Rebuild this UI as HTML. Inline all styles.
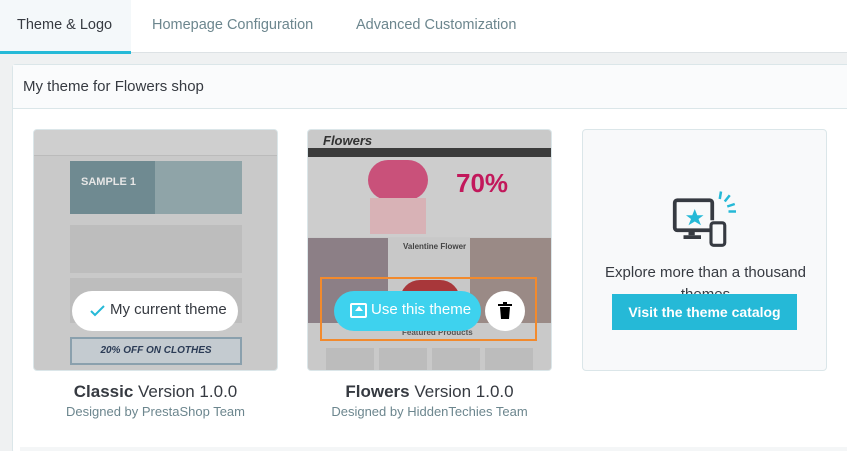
<!DOCTYPE html>
<html style="height:451px;overflow:hidden"><head><style>
*{margin:0;padding:0;box-sizing:border-box}
body{width:847px;height:451px;overflow:hidden;background:#eff1f2;font-family:"Liberation Sans",sans-serif;position:relative}
.tabs{position:absolute;left:0;top:0;width:847px;height:53px;background:#fff;border-bottom:1px solid #dde2e5}
.tab{position:absolute;top:17px;font-size:14.5px;color:#6c868e}
.act{position:absolute;left:0;top:0;width:131px;height:54px;background:#f4f8fa;border-bottom:3px solid #25b9d7}
.panel{position:absolute;left:12px;top:64px;width:840px;height:390px;background:#fff;border:1px solid #dbe6e9;border-radius:4px}
.ph{height:44px;background:#fafbfc;border-bottom:1px solid #dbe6e9;padding:13px 10px;font-size:15px;color:#363a41}
.card{position:absolute;top:129px;width:245px;height:242px;border:1px solid #dbe6e9;border-radius:4px;overflow:hidden;background:#c9c9c9}
.cap{position:absolute;text-align:center;width:245px}
.t1{font-size:17px;color:#363a41;top:382px}
.t2{font-size:13px;color:#6c868e;top:404px}
</style></head><body>
<div class="tabs"><div class="act"></div>
<div class="tab" style="left:17px;color:#363a41">Theme &amp; Logo</div>
<div class="tab" style="left:152px">Homepage Configuration</div>
<div class="tab" style="left:356px">Advanced Customization</div></div>
<div class="panel"><div class="ph">My theme for Flowers shop</div></div>
<div style="position:absolute;left:20px;top:447px;width:827px;height:4px;background:#f4f6f7"></div>

<div class="card" style="left:33px">
 <div style="position:absolute;left:0;top:0;width:245px;height:26px;background:#cfcfcf;border-bottom:1px solid #bbb"></div>
 <div style="position:absolute;left:36px;top:31px;width:172px;height:53px;background:#8fa4a8"></div>
 <div style="position:absolute;left:36px;top:31px;width:85px;height:53px;background:#6f8a91"></div>
 <div style="position:absolute;left:47px;top:46px;color:#e6e6e6;font-size:11px;font-weight:bold">SAMPLE 1</div>
 <div style="position:absolute;left:36px;top:95px;width:172px;height:48px;background:#bdbdbd"></div>
 <div style="position:absolute;left:36px;top:148px;width:172px;height:45px;background:#bdbdbd"></div>
 <div style="position:absolute;left:36px;top:207px;width:172px;height:28px;background:#c4cbd0;border:2px solid #8aa0ad;text-align:center;font-size:10px;font-weight:bold;font-style:italic;color:#2b3b55;padding-top:6px">20% OFF ON CLOTHES</div>
 <div style="position:absolute;left:38px;top:161px;width:166px;height:40px;background:#fff;border-radius:20px;font-size:15px;color:#363a41;padding:10px 0 0 38px">My current theme</div>
 <svg style="position:absolute;left:56px;top:175px" width="15" height="12"><path d="M1 6l4 4 9-9" stroke="#25b9d7" stroke-width="2" fill="none"/></svg>
</div>
<div class="cap t1" style="left:33px"><b>Classic</b> Version 1.0.0</div>
<div class="cap t2" style="left:33px">Designed by PrestaShop Team</div>

<div class="card" style="left:307px">
 <div style="position:absolute;left:15px;top:3px;font-size:13px;font-weight:bold;font-style:italic;color:#333">Flowers</div>
 <div style="position:absolute;left:0;top:18px;width:245px;height:9px;background:#3b3b3b"></div>
 <div style="position:absolute;left:0;top:27px;width:245px;height:80px;background:#cdcdcd"></div>
 <div style="position:absolute;left:60px;top:30px;width:60px;height:40px;background:#c9517a;border-radius:20px"></div>
 <div style="position:absolute;left:62px;top:68px;width:56px;height:36px;background:#d8b2b6"></div>
 <div style="position:absolute;left:148px;top:38px;font-size:26px;font-weight:bold;color:#c2185b">70%</div>
 <div style="position:absolute;left:0;top:108px;width:80px;height:85px;background:#8c7f86"></div>
 <div style="position:absolute;left:80px;top:108px;width:82px;height:85px;background:#c8c8c8"></div>
 <div style="position:absolute;left:162px;top:108px;width:83px;height:85px;background:#9a8a86"></div>
 <div style="position:absolute;left:95px;top:112px;font-size:8px;font-weight:bold;color:#444">Valentine Flower</div>
 <div style="position:absolute;left:92px;top:150px;width:60px;height:40px;background:#a8373a;border-radius:20px 20px 0 0"></div>
 <div style="position:absolute;left:0;top:193px;width:245px;height:49px;background:#c9c9c9"></div>
 <div style="position:absolute;left:94px;top:198px;font-size:8px;font-weight:bold;color:#555">Featured Products</div>
 <div style="position:absolute;left:18px;top:218px;width:48px;height:24px;background:#bcbcbc"></div>
 <div style="position:absolute;left:71px;top:218px;width:48px;height:24px;background:#bcbcbc"></div>
 <div style="position:absolute;left:124px;top:218px;width:48px;height:24px;background:#bcbcbc"></div>
 <div style="position:absolute;left:177px;top:218px;width:48px;height:24px;background:#bcbcbc"></div>
 <div style="position:absolute;left:12px;top:147px;width:217px;height:64px;border:2px solid #f28a2d"></div>
 <div style="position:absolute;left:26px;top:161px;width:147px;height:40px;background:#3ed2ee;border-radius:20px;color:#fff;font-size:15px;padding:10px 0 0 37px">Use this theme</div>
 <div style="position:absolute;left:42px;top:173px;width:17px;height:15px;border:2px solid #fff;border-radius:2px"></div>
 <div style="position:absolute;left:47px;top:176px;width:0;height:0;border-left:4px solid transparent;border-right:4px solid transparent;border-bottom:5px solid #fff"></div>
 <div style="position:absolute;left:177px;top:161px;width:40px;height:40px;background:#fff;border-radius:50%"></div>
 <svg style="position:absolute;left:190px;top:172px" width="14" height="17"><rect x="0" y="2" width="14" height="2" fill="#000"/><rect x="5" y="0" width="4" height="2" fill="#000"/><path d="M2 5h10l-1 12H3z" fill="#000"/></svg>
</div>
<div class="cap t1" style="left:307px"><b>Flowers</b> Version 1.0.0</div>
<div class="cap t2" style="left:307px">Designed by HiddenTechies Team</div>

<div class="card" style="left:582px;background:#f8f9fa">
 <svg style="position:absolute;left:88px;top:56px" width="70" height="66" viewBox="0 0 56 50">
  <path d="M33 26V12a2 2 0 0 0-2-2H5a2 2 0 0 0-2 2v20a2 2 0 0 0 2 2h27" stroke="#363a41" stroke-width="3" fill="none"/>
  <rect x="14" y="34" width="5" height="4" fill="#363a41"/><rect x="10" y="38" width="14" height="3" fill="#363a41"/>
  <rect x="32" y="28" width="11" height="18" rx="2" stroke="#363a41" stroke-width="2.5" fill="#f8f9fa"/>
  <path d="M19 17l2 5h5l-4 3 2 5-5-3-5 3 2-5-4-3h5z" fill="#25b9d7"/>
  <path d="M40 3l-1 6M47 6l-4 5M51 13l-6 2M52 19h-6" stroke="#25b9d7" stroke-width="2"/>
 </svg>
 <div style="position:absolute;left:0;top:132px;width:245px;text-align:center;font-size:15px;color:#363a41;line-height:22px">Explore more than a thousand<br>themes</div>
 <div style="position:absolute;left:29px;top:164px;width:185px;height:36px;background:#25b9d7;color:#fff;font-size:14px;font-weight:bold;text-align:center;padding-top:10px">Visit the theme catalog</div>
</div>
</body></html>
